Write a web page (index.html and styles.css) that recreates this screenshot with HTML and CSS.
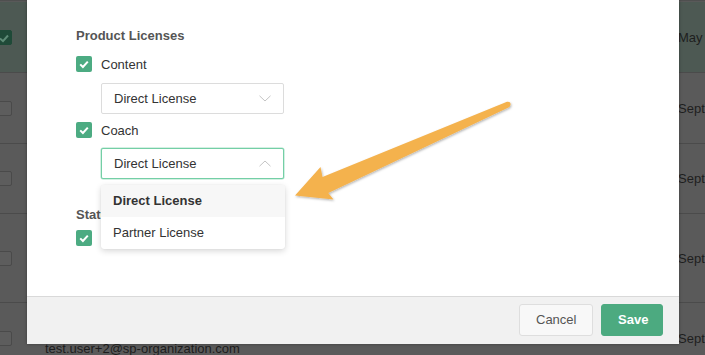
FILE: index.html
```html
<!DOCTYPE html>
<html lang="en">
<head>
<meta charset="utf-8">
<title>Edit user licenses</title>
<link rel="stylesheet" href="styles.css">
</head>
<body>
<div class="page">
  <div class="table">
    <div class="row row-selected">
      <div class="cell-check"><span class="bg-box bg-box-on"><svg viewBox="0 0 16 16" width="16" height="16"><path d="M4 8.5 L7 11.2 L12 5.5" fill="none" stroke="#5f8c77" stroke-width="2"/></svg></span></div>
      <div class="cell-main"></div>
      <div class="cell-date">May</div>
    </div>
    <div class="row row-2">
      <div class="cell-check"><span class="bg-box"></span></div>
      <div class="cell-main"></div>
      <div class="cell-date">Sept</div>
    </div>
    <div class="row row-3">
      <div class="cell-check"><span class="bg-box"></span></div>
      <div class="cell-main"></div>
      <div class="cell-date">Sept</div>
    </div>
    <div class="row row-4">
      <div class="cell-check"><span class="bg-box"></span></div>
      <div class="cell-main"></div>
      <div class="cell-date">Sept</div>
    </div>
    <div class="row row-5">
      <div class="cell-check"><span class="bg-box"></span></div>
      <div class="cell-main"><span class="email">test.user+2@sp-organization.com</span></div>
      <div class="cell-date">Sept</div>
    </div>
  </div>

  <div class="modal">
    <div class="modal-body">
      <h3 class="section-title first-title">Product Licenses</h3>
      <label class="check-row first">
        <span class="checkbox"><svg viewBox="0 0 16 16" width="16" height="16"><path d="M4.2 8.4 L6.9 11 L11.8 5.6" fill="none" stroke="#fff" stroke-width="2"/></svg></span>
        <span class="check-label">Content</span>
      </label>
      <div class="select">
        <span>Direct License</span>
        <svg class="chev" viewBox="0 0 12 7" width="12" height="7"><path d="M0.5 0.8 L6 6 L11.5 0.8" fill="none" stroke="#c4c4c4" stroke-width="1"/></svg>
      </div>
      <label class="check-row coach">
        <span class="checkbox"><svg viewBox="0 0 16 16" width="16" height="16"><path d="M4.2 8.4 L6.9 11 L11.8 5.6" fill="none" stroke="#fff" stroke-width="2"/></svg></span>
        <span class="check-label">Coach</span>
      </label>
      <div class="select select-open">
        <span>Direct License</span>
        <svg class="chev" viewBox="0 0 12 7" width="12" height="7"><path d="M0.5 6.2 L6 1 L11.5 6.2" fill="none" stroke="#c4c4c4" stroke-width="1"/></svg>
        <ul class="menu">
          <li class="menu-item active">Direct License</li>
          <li class="menu-item">Partner License</li>
        </ul>
      </div>
      <h3 class="section-title status">Status</h3>
      <label class="check-row status-row" aria-label="Active">
        <span class="checkbox"><svg viewBox="0 0 16 16" width="16" height="16"><path d="M4.2 8.4 L6.9 11 L11.8 5.6" fill="none" stroke="#fff" stroke-width="2"/></svg></span>
      </label>
    </div>
    <div class="modal-footer">
      <button class="btn btn-cancel">Cancel</button>
      <button class="btn btn-save">Save</button>
    </div>
  </div>

  <svg class="arrow" viewBox="0 0 705 355" width="705" height="355">
    <defs>
      <filter id="sh" x="-10%" y="-10%" width="120%" height="130%">
        <feDropShadow dx="0.8" dy="1.2" stdDeviation="0.8" flood-color="#000" flood-opacity="0.3"/>
      </filter>
    </defs>
    <path d="M295 195.5 L320.5 167 L322.5 177 L507 101.8 Q511.5 101.5 510.3 105.5 Q509.8 107.2 508.5 107.6 L328.3 193 L333.5 199.6 Z" fill="#f4b24e" filter="url(#sh)"/>
  </svg>
</div>
</body>
</html>
```

FILE: styles.css
```css
* { box-sizing: border-box; }

html, body {
  margin: 0;
  padding: 0;
}

body {
  width: 705px;
  height: 355px;
  overflow: hidden;
  background: #595959;
  font-family: "Liberation Sans", Arial, sans-serif;
  font-size: 13px;
  color: #333;
}

.page {
  position: relative;
  width: 705px;
  height: 355px;
  overflow: hidden;
}

/* background table, dimmed by overlay */
.table {
  display: flex;
  flex-direction: column;
  padding-top: 1px;
  border-top: 1px solid #4f4f4f;
}

.row {
  display: grid;
  grid-template-columns: 12px 1fr 26px;
  align-items: center;
  border-bottom: 1px solid #4b4b4b;
  background: #5a5a5a;
}

.row-selected { height: 71px; background: #4d5953; }
.row-2 { height: 71px; }
.row-3 { height: 70px; }
.row-4 { height: 89px; }
.row-5 { height: 80px; align-items: start; }

.cell-check {
  display: flex;
  justify-content: flex-end;
}

.row-5 .cell-check { padding-top: 28px; }

.bg-box {
  display: block;
  width: 16px;
  height: 15px;
  margin-left: -4px;
  border: 1px solid #4a4a4a;
  border-radius: 2px;
  background: #5d5d5d;
}

.bg-box-on {
  background: #1f4a38;
  border-color: #1f4a38;
}

.bg-box-on svg { display: block; margin: -1px 0 0 -1px; }

.cell-main { height: 100%; }

.row-5 .cell-main { padding: 38px 0 0 33px; }

.email {
  display: block;
  line-height: 16px;
  color: #1d1d1d;
  white-space: nowrap;
}

.cell-date {
  color: #1e1e1e;
  white-space: nowrap;
  margin-left: -1px;
}

.row-5 .cell-date { padding-top: 28px; }

/* modal */
.modal {
  position: absolute;
  left: 27px;
  top: 0;
  width: 652px;
  height: 344px;
  background: #fff;
  display: flex;
  flex-direction: column;
  box-shadow: 0 0 3px rgba(0, 0, 0, 0.35);
  z-index: 2;
}

.modal-body {
  flex: 1;
  padding: 27px 0 0 49px;
}

.section-title {
  margin: 0;
  font-size: 13px;
  line-height: 16px;
  font-weight: bold;
  color: #555;
}

.section-title.first-title { padding-top: 1px; }

.section-title.status { margin-top: 28px; }

.check-row {
  display: flex;
  align-items: center;
  gap: 9px;
  height: 16px;
  line-height: 16px;
}

.check-row.first { margin-top: 12px; }
.check-row.coach { margin-top: 8px; }
.check-row.status-row { margin-top: 7px; }

.checkbox {
  display: block;
  width: 16px;
  height: 16px;
  border-radius: 2px;
  background: #4cab82;
}

.checkbox svg { display: block; }

.check-label {
  color: #333;
  padding-top: 1px;
}

.select {
  position: relative;
  display: flex;
  align-items: center;
  justify-content: space-between;
  width: 183px;
  height: 31px;
  margin: 11px 0 0 25px;
  padding: 0 12px;
  border: 1px solid #dcdcdc;
  border-radius: 2px;
  color: #333;
  background: #fff;
}

.select-open {
  margin-top: 10px;
  border-color: #74cfa6;
  box-shadow: 0 0 0 0.5px #a9e2c8;
}

.chev { display: block; }

.menu {
  position: absolute;
  left: -1px;
  top: 36px;
  width: 184px;
  margin: 0;
  padding: 0;
  list-style: none;
  background: #fff;
  border-radius: 3px;
  box-shadow: 0 2px 6px rgba(0, 0, 0, 0.16), 0 0 1px rgba(0, 0, 0, 0.12);
  z-index: 3;
}

.menu-item {
  height: 32px;
  line-height: 32px;
  padding-left: 12px;
  color: #333;
}

.menu-item.active {
  font-weight: bold;
  background: #f7f7f7;
  border-radius: 3px 3px 0 0;
}

.modal-footer {
  height: 48px;
  border-top: 1px solid #d9d9d9;
  background: #f1f1f1;
  display: flex;
  justify-content: flex-end;
  align-items: flex-start;
  gap: 8px;
  padding: 7px 16px 0 0;
}

.btn {
  height: 32px;
  padding: 0 16px;
  border-radius: 3px;
  font-family: "Liberation Sans", Arial, sans-serif;
  font-size: 13px;
  line-height: 30px;
}

.btn-cancel {
  background: #f8f8f8;
  border: 1px solid #dedede;
  color: #555;
  width: 74px;
}

.btn-save {
  background: #4caa80;
  border: 1px solid #4caa80;
  color: #fff;
  font-weight: bold;
  width: 62px;
}

.arrow {
  position: absolute;
  left: 0;
  top: 0;
  z-index: 5;
  pointer-events: none;
}
```
